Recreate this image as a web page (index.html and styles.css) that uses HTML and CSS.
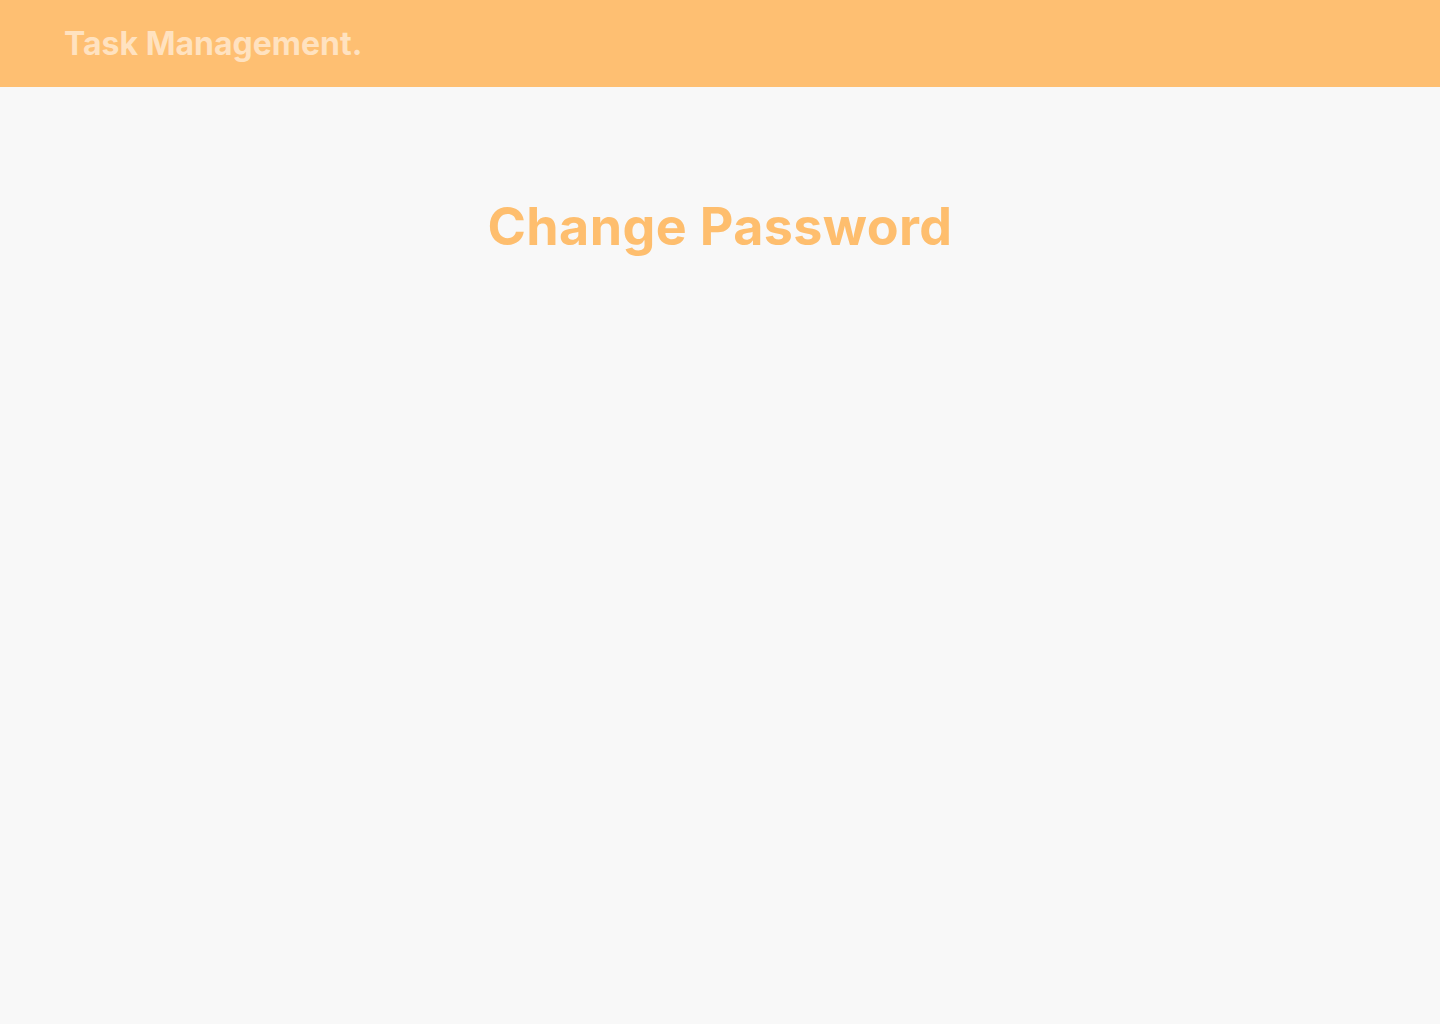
FILE: index.html
```html
<!DOCTYPE html>
<html lang="en">
<head>
<meta charset="utf-8">
<title>Change Password</title>
<link rel="stylesheet" href="styles.css">
</head>
<body>
<header class="topbar">
  <div class="brand">Task Management.</div>
</header>
<main class="content">
  <h1 class="title">Change Password</h1>
</main>
</body>
</html>
```

FILE: styles.css
```css
* { box-sizing: border-box; }
html, body { margin: 0; padding: 0; }
body {
  background: #f8f8f8;
  font-family: "Inter", "Open Sans", sans-serif;
  min-height: 1024px;
}
.topbar {
  height: 87px;
  background: #febf72;
  display: flex;
  align-items: center;
  padding: 0 64px;
}
.brand {
  color: #ffe2c0;
  font-weight: 700;
  font-size: 32px;
  line-height: 1;
}
.content {
  display: flex;
  justify-content: center;
  padding-top: 105px;
}
.title {
  margin: 0;
  color: #febe6e;
  font-weight: 700;
  font-size: 52px;
  line-height: 70px;
  letter-spacing: 0.4px;
}
```
